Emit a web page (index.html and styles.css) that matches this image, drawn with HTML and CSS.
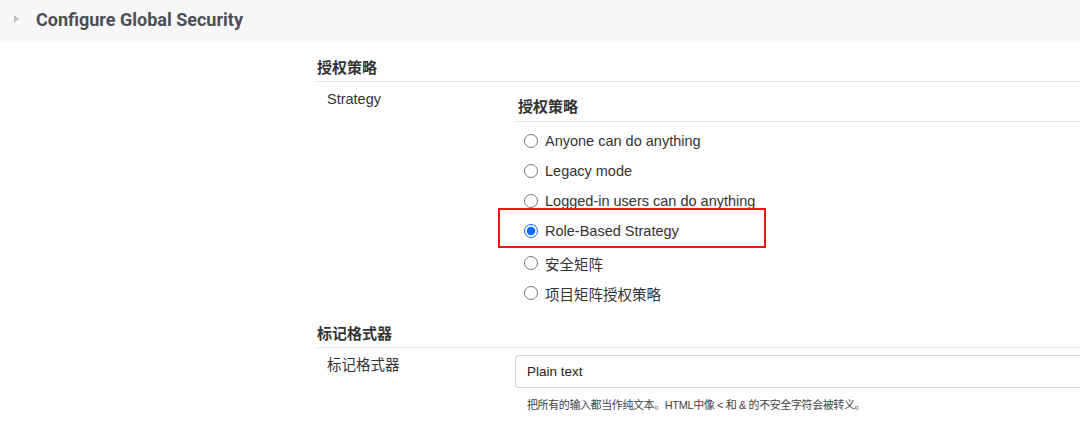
FILE: index.html
```html
<!DOCTYPE html>
<html lang="zh">
<head>
<meta charset="utf-8">
<title>Configure Global Security</title>
<link rel="stylesheet" href="styles.css">
</head>
<body>
<header class="page-header">
  <span class="caret"></span>
  <h1 class="page-title">Configure Global Security</h1>
</header>
<main class="main">
  <section class="section">
    <h2 class="section-title">授权策略</h2>
    <div class="row">
      <div class="row-label">Strategy</div>
      <div class="row-value">
        <h3 class="sub-title">授权策略</h3>
        <ul class="options">
          <li class="option"><input type="radio" name="auth" class="radio"><span>Anyone can do anything</span></li>
          <li class="option"><input type="radio" name="auth" class="radio"><span>Legacy mode</span></li>
          <li class="option"><input type="radio" name="auth" class="radio"><span>Logged-in users can do anything</span></li>
          <li class="option option-marked"><input type="radio" name="auth" class="radio" checked><span>Role-Based Strategy</span><span class="highlight"></span></li>
          <li class="option option-gap"><input type="radio" name="auth" class="radio"><span>安全矩阵</span></li>
          <li class="option"><input type="radio" name="auth" class="radio"><span>项目矩阵授权策略</span></li>
        </ul>
      </div>
    </div>
  </section>
  <section class="section">
    <h2 class="section-title">标记格式器</h2>
    <div class="row">
      <div class="row-label">标记格式器</div>
      <div class="row-value">
        <div class="select">Plain text</div>
        <p class="help">把所有的输入都当作纯文本。HTML中像 &lt; 和 &amp; 的不安全字符会被转义。</p>
      </div>
    </div>
  </section>
</main>
</body>
</html>
```
FILE: styles.css
```css
html, body {
  margin: 0;
  padding: 0;
  background: #ffffff;
}
body {
  font-family: "Liberation Sans", Arial, "Noto Sans CJK SC", sans-serif;
  color: #333333;
  font-size: 14.5px;
  width: 1080px;
  overflow: hidden;
}
.page-header {
  height: 42px;
  background: #f7f7f7;
  display: flex;
  align-items: center;
  padding: 0 0 4px 14px;
  box-sizing: border-box;
}
.caret {
  width: 0;
  height: 0;
  border-top: 4px solid transparent;
  border-bottom: 4px solid transparent;
  border-left: 5px solid #c4c4c4;
  margin-right: 17px;
}
.page-title {
  margin: 0;
  font-family: Roboto, "Liberation Sans", sans-serif;
  font-weight: 700;
  font-size: 18px;
  color: #4a4f58;
}
.main {
  padding-left: 317px;
}
.section-title {
  margin: 16px 0 0 0;
  font-size: 15px;
  line-height: 20px;
  font-weight: 700;
  color: #333333;
  padding-bottom: 3px;
  border-bottom: 1px solid #e3e3e3;
}
.row {
  display: grid;
  grid-template-columns: 198px 1fr;
}
.row-label {
  padding: 7px 0 0 10px;
  line-height: 20px;
}
.row-value {
  padding-top: 7px;
}
.sub-title {
  margin: 8px 0 0 0;
  padding: 0 0 4px 3px;
  font-size: 15px;
  line-height: 20px;
  font-weight: 700;
  border-bottom: 1px solid #e3e3e3;
}
.options {
  list-style: none;
  margin: 4px 0 0 0;
  padding: 0;
}
.option {
  height: 30px;
  display: flex;
  align-items: center;
  gap: 7px;
  padding-left: 9px;
  position: relative;
}
.option-gap {
  margin-top: 2px;
}
.radio {
  width: 14px;
  height: 14px;
  margin: 0;
  accent-color: #0a6cff;
}
.highlight {
  position: absolute;
  left: -17px;
  top: -8px;
  width: 268px;
  height: 40px;
  box-sizing: border-box;
  border: 2px solid #f01414;
  pointer-events: none;
}
.select {
  height: 33px;
  box-sizing: border-box;
  border: 1px solid #d3d3d3;
  border-radius: 4px;
  border-right: none;
  border-top-right-radius: 0;
  border-bottom-right-radius: 0;
  box-shadow: inset 0 1px 1px rgba(0, 0, 0, 0.04);
  font-size: 13.5px;
  padding-left: 11px;
  display: flex;
  align-items: center;
  color: #222222;
}
.help {
  margin: 9px 0 0 12px;
  font-size: 11px;
  letter-spacing: -0.4px;
  line-height: 16px;
  color: #444444;
}
```
